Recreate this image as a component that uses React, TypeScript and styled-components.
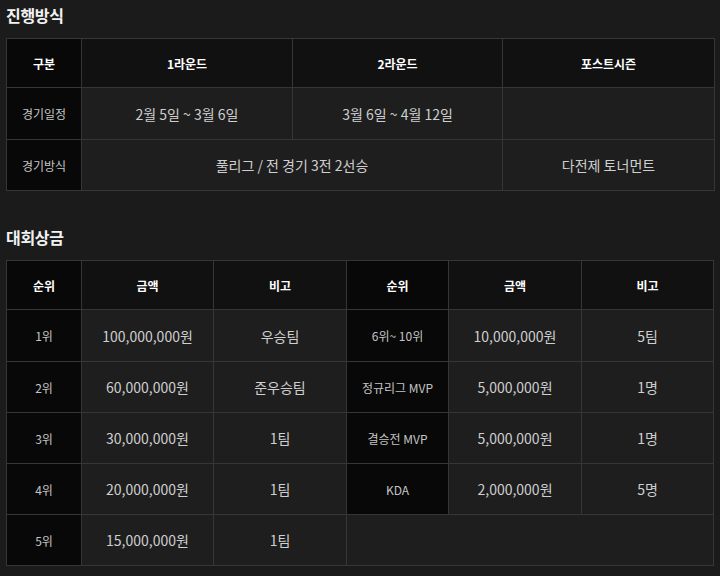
import React from 'react';
import styled, {createGlobalStyle} from 'styled-components';

const GlobalStyle = createGlobalStyle`
  html, body {
    margin: 0;
    padding: 0;
    background: #1b1b1b;
  }
  body {
    font-family: 'Noto Sans CJK KR', 'Noto Sans', sans-serif;
  }
`;

type Cell = {text?: string; span?: number};

const scheduleCols = [75, 211, 210, 212];
const scheduleHead = ['구분', '1라운드', '2라운드', '포스트시즌'];
const scheduleRows: {label: string; cells: Cell[]; height: number}[] = [
  {
    label: '경기일정',
    height: 52,
    cells: [{text: '2월 5일 ~ 3월 6일'}, {text: '3월 6일 ~ 4월 12일'}, {text: ''}],
  },
  {
    label: '경기방식',
    height: 51,
    cells: [{text: '풀리그 / 전 경기 3전 2선승', span: 2}, {text: '다전제 토너먼트'}],
  },
];

const prizeCols = [75, 132, 133, 102, 133, 132];
const prizeHead = ['순위', '금액', '비고', '순위', '금액', '비고'];
const prizeRows: [string, string, string, string?, string?, string?][] = [
  ['1위', '100,000,000원', '우승팀', '6위~ 10위', '10,000,000원', '5팀'],
  ['2위', '60,000,000원', '준우승팀', '정규리그 MVP', '5,000,000원', '1명'],
  ['3위', '30,000,000원', '1팀', '결승전 MVP', '5,000,000원', '1명'],
  ['4위', '20,000,000원', '1팀', 'KDA', '2,000,000원', '5명'],
  ['5위', '15,000,000원', '1팀'],
];

const App: React.FC = () => {
  return (
    <Page>
      <GlobalStyle />
      <Title>진행방식</Title>
      <Table>
        <colgroup>
          {scheduleCols.map((w, i) => (
            <col key={i} style={{width: w}} />
          ))}
        </colgroup>
        <thead>
          <tr style={{height: 49}}>
            {scheduleHead.map((h, i) => (
              <HeadCell key={i} $first={i === 0}>
                {h}
              </HeadCell>
            ))}
          </tr>
        </thead>
        <tbody>
          {scheduleRows.map(row => (
            <tr key={row.label} style={{height: row.height}}>
              <LabelCell>{row.label}</LabelCell>
              {row.cells.map((c, i) => (
                <DataCell key={i} colSpan={c.span}>
                  {c.text}
                </DataCell>
              ))}
            </tr>
          ))}
        </tbody>
      </Table>

      <Title $gap>대회상금</Title>
      <Table>
        <colgroup>
          {prizeCols.map((w, i) => (
            <col key={i} style={{width: w}} />
          ))}
        </colgroup>
        <thead>
          <tr style={{height: 49}}>
            {prizeHead.map((h, i) => (
              <HeadCell key={i} $first={i === 0 || i === 3}>
                {h}
              </HeadCell>
            ))}
          </tr>
        </thead>
        <tbody>
          {prizeRows.map((r, idx) => (
            <tr key={idx} style={{height: idx === 0 ? 52 : 51}}>
              <LabelCell>{r[0]}</LabelCell>
              <DataCell>{r[1]}</DataCell>
              <DataCell>{r[2]}</DataCell>
              {r[3] ? (
                <>
                  <LabelCell>{r[3]}</LabelCell>
                  <DataCell>{r[4]}</DataCell>
                  <DataCell>{r[5]}</DataCell>
                </>
              ) : (
                <DataCell colSpan={3} />
              )}
            </tr>
          ))}
        </tbody>
      </Table>
    </Page>
  );
};

const Page = styled.div`
  padding: 4px 6px 0 6px;
  width: 708px;
`;

const Title = styled.h2<{$gap?: boolean}>`
  margin: ${p => (p.$gap ? '35px' : '0')} 0 12px 0;
  font-size: 16px;
  line-height: 22px;
  font-weight: 700;
  color: #f2f2f2;
  letter-spacing: -0.3px;
`;

const Table = styled.table`
  width: 708px;
  table-layout: fixed;
  border-collapse: collapse;
  border: 1px solid #363636;
`;

const baseCell = `
  border: 1px solid #363636;
  text-align: center;
  vertical-align: middle;
  padding: 0;
`;

const HeadCell = styled.th<{$first?: boolean}>`
  ${baseCell}
  background: ${p => (p.$first ? '#080808' : '#111111')};
  color: #ffffff;
  font-size: 12px;
  font-weight: 700;
`;

const LabelCell = styled.td`
  ${baseCell}
  background: #080808;
  color: #c4c4c4;
  font-size: 12px;
  font-weight: 400;
`;

const DataCell = styled.td`
  ${baseCell}
  background: #1e1e1e;
  color: #cfcfcf;
  font-size: 14px;
  font-weight: 400;
`;

export default App;
